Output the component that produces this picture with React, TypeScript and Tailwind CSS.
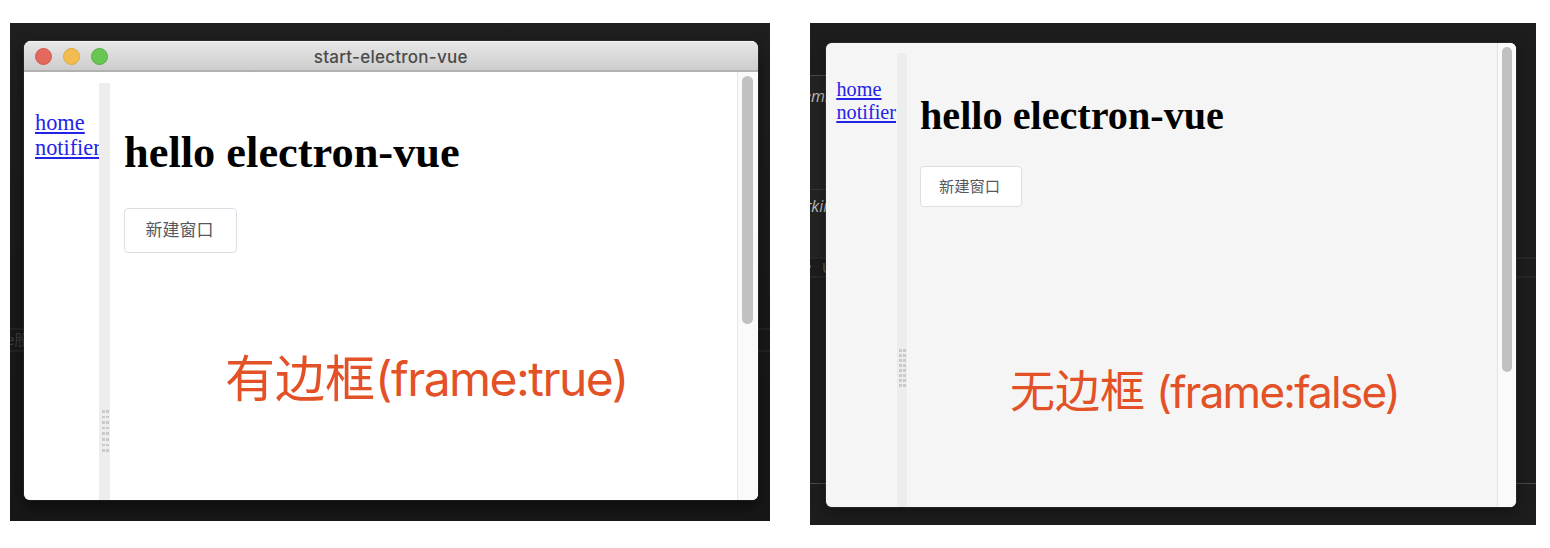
function Grip({ className }: { className: string }) {
  return (
    <div className={`grid grid-cols-2 ${className}`}>
      {Array.from({ length: 16 }, (_, i) => (
        <span key={i} className="h-[2.6px] bg-[#cacaca]" />
      ))}
    </div>
  );
}

function FramedWindow() {
  return (
    <section className="relative mt-[23px] ml-[10px] h-[498px] w-[760px] shrink-0 overflow-hidden bg-linear-to-b from-[#1f1f1f] via-[#1a1a1a] to-[#171717] pt-[18px] pl-[14px]">
      <div className="absolute top-[305px] left-0 h-[24px] w-full border-y-2 border-[#242424] bg-[#191919]" />
      <div className="absolute top-[307px] -left-[4px] font-['Noto_Sans','Noto_Sans_CJK_SC',sans-serif] text-[15px] leading-[18px] whitespace-nowrap text-[#3c3c3c]">
        e股
      </div>
      <div className="relative flex h-[459px] w-[733.5px] flex-col overflow-hidden rounded-t-[7px] rounded-b-[6px] bg-white shadow-[0_0_1px_#aaa,0_6px_16px_rgba(0,0,0,0.5)]">
        <header className="grid h-[31px] shrink-0 grid-cols-[1fr_auto_1fr] items-center border-b-2 border-[#b1b1b1] bg-linear-to-b from-[#e8e8e8] to-[#cdcdcd] shadow-[inset_0_1px_0_#f4f4f4]">
          <div className="flex gap-[11px] pt-px pl-[11px]">
            <span className="size-[17px] rounded-full border border-[#d35a50] bg-[#e5685d]" />
            <span className="size-[17px] rounded-full border border-[#dba944] bg-[#f2bd4e]" />
            <span className="size-[17px] rounded-full border border-[#57ae45] bg-[#68c653]" />
          </div>
          <h2 className="pt-[3px] font-['Inter',sans-serif] text-[17px] leading-[20px] font-medium tracking-[0.25px] text-[#4b4b4b]">
            start-electron-vue
          </h2>
        </header>
        <div className="flex min-h-0 flex-1">
          <nav className="flex w-[75px] flex-col overflow-hidden pt-[38px] pl-[11px] font-['Liberation_Serif',serif] text-[22.3px] leading-[25px] text-[#2424e8] underline decoration-[1.5px] underline-offset-[2px]">
            <a>home</a>
            <a>notifier</a>
          </nav>
          <div className="mt-[11px] w-[11px] bg-[#ededed]">
            <Grip className="mt-[327px] ml-[3px] w-[7px] gap-x-[1px] gap-y-[3px]" />
          </div>
          <main className="flex flex-1 flex-col items-start pl-[14px]">
            <h1 className="mt-[55px] font-['Liberation_Serif',serif] text-[44.4px] leading-[50px] font-bold whitespace-nowrap text-black">
              hello electron-vue
            </h1>
            <button className="mt-[31px] h-[45px] w-[113px] rounded-[4px] border-[1.5px] border-[#dcdfe6] bg-white pr-[2px] pb-[3px] font-['Noto_Sans_CJK_SC',sans-serif] text-[17px] leading-[20px] text-[#55585d]">
              新建窗口
            </button>
            <p className="mt-[91px] ml-[101px] flex h-[70px] items-center font-['Inter','Noto_Sans_CJK_SC',sans-serif] text-[48px] leading-[70px] whitespace-nowrap text-[#e35126]">
              <span className="text-[50px]">有边框</span>
              <span className="tracking-[-1.55px]">(frame:true)</span>
            </p>
          </main>
          <div className="w-[20.5px] border-l border-[#e6e6e6] bg-[#fafafa] pt-[4px] pl-[4px]">
            <div className="h-[248px] w-[11px] rounded-full bg-[#c1c1c1]" />
          </div>
        </div>
      </div>
    </section>
  );
}

function FramelessWindow() {
  return (
    <section className="relative mt-[23px] ml-[40px] h-[502px] w-[726px] shrink-0 overflow-hidden bg-[#1d1d1d] pt-[20px] pl-[16px]">
      <div className="absolute top-[52px] left-0 h-[183px] w-[30px] border-y border-[#484848] bg-[#232323]" />
      <div className="absolute top-[166px] left-0 h-px w-[30px] bg-[#363636]" />
      <div className="absolute top-[234px] left-0 h-[21px] w-full border-y-2 border-[#272727]" />
      <div className="absolute top-[460px] left-0 h-px w-full bg-[#484848]" />
      <div className="absolute top-[62px] -left-[7px] font-['Open_Sans',sans-serif] text-[16px] leading-[22px] text-[#bdbdbd] italic">
        emi
      </div>
      <div className="absolute top-[172px] -left-[5px] font-['Open_Sans',sans-serif] text-[16px] leading-[22px] text-[#bdbdbd] italic">
        rkin
      </div>
      <div className="absolute top-[235px] left-[12px] font-['Open_Sans',sans-serif] text-[15px] leading-[18px] text-[#666]">
        U
      </div>
      <div className="absolute top-[242px] -left-[2px] size-[3px] rounded-full bg-[#666]" />
      <div className="relative flex h-[464px] w-[690px] overflow-hidden rounded-[6px] bg-[#f5f5f5] shadow-[0_0_1px_#bbb,0_4px_14px_rgba(0,0,0,0.4)]">
        <nav className="flex w-[71px] flex-col pt-[35px] pl-[10.5px] font-['Liberation_Serif',serif] text-[20.2px] leading-[22.6px] text-[#2424e8] underline decoration-[1.5px] underline-offset-[2px]">
          <a>home</a>
          <a>notifier</a>
        </nav>
        <div className="mt-[10px] w-[10px] bg-[#ededed]">
          <Grip className="mt-[296px] ml-[2px] w-[7px] gap-x-[1px] gap-y-[2.45px]" />
        </div>
        <main className="flex flex-1 flex-col items-start pl-[13px]">
          <h1 className="mt-[50px] font-['Liberation_Serif',serif] text-[40.2px] leading-[46px] font-bold whitespace-nowrap text-black">
            hello electron-vue
          </h1>
          <button className="mt-[27px] h-[41px] w-[102px] rounded-[4px] border-[1.5px] border-[#dcdfe6] bg-white pr-[3px] pb-[4px] font-['Noto_Sans_CJK_SC',sans-serif] text-[15.3px] leading-[18px] text-[#55585d]">
            新建窗口
          </button>
          <p className="mt-[150px] ml-[90px] flex h-[70px] items-center font-['Inter','Noto_Sans_CJK_SC',sans-serif] text-[44px] leading-[70px] whitespace-nowrap text-[#e35126]">
            <span className="mr-[11px] text-[45px]">无边框</span>
            <span className="tracking-[-1.75px]">(frame:false)</span>
          </p>
        </main>
        <div className="w-[19px] border-l border-[#e3e3e3] bg-[#fafafa] pt-[4px] pl-[4px]">
          <div className="h-[325px] w-[10px] rounded-full bg-[#c1c1c1]" />
        </div>
      </div>
    </section>
  );
}

export default function App() {
  return (
    <div className="flex h-[548px] w-[1550px] items-start overflow-hidden bg-white">
      <FramedWindow />
      <FramelessWindow />
    </div>
  );
}
